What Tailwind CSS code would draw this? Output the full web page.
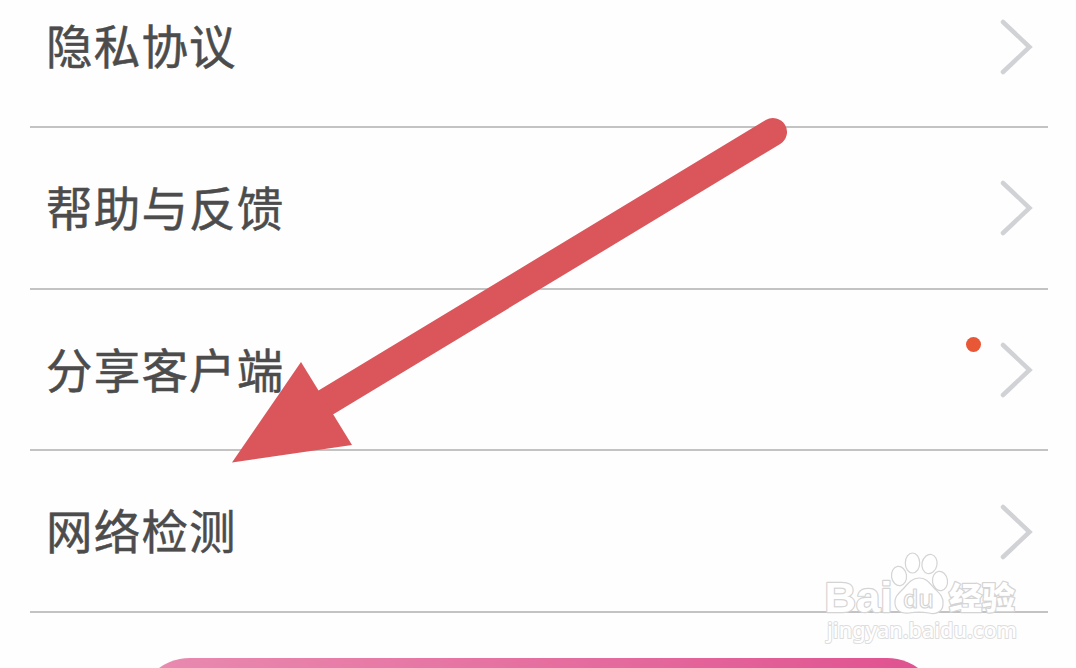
<!DOCTYPE html>
<html lang="zh-CN">
  <head>
    <meta charset="UTF-8" />
    <meta name="viewport" content="width=device-width, initial-scale=1.0" />
    <title>设置</title>
    <script src="https://cdn.jsdelivr.net/npm/@tailwindcss/browser@4"></script>
  </head>
  <body class="relative h-screen overflow-hidden bg-[#fefefe] font-['Noto_Sans_CJK_SC',sans-serif] text-[46.5px] tracking-[1.2px] text-[#4c4c4c]">
    <!-- settings list, scrolled a little past its first row -->
    <ul class="-mt-[33.7px] ml-[30px] w-[1018px] [-webkit-text-stroke:0.5px_#4c4c4c]">
      <li class="flex h-[161.7px] items-center justify-between border-b-2 border-[#c3c3c3] pl-[16px] pr-[15px]">
        <span class="pb-[3px] leading-none">隐私协议</span>
        <svg class="mt-px h-[56px] w-[34px]" viewBox="0 0 34 56" fill="none" stroke="#d0d2d5" stroke-width="4.5" stroke-linecap="round"><path d="M4 3L30.5 28L4 53" /></svg>
      </li>
      <li class="flex h-[161.7px] items-center justify-between border-b-2 border-[#c3c3c3] pl-[16px] pr-[15px]">
        <span class="pb-[3px] leading-none">帮助与反馈</span>
        <svg class="mt-px h-[56px] w-[34px]" viewBox="0 0 34 56" fill="none" stroke="#d0d2d5" stroke-width="4.5" stroke-linecap="round"><path d="M4 3L30.5 28L4 53" /></svg>
      </li>
      <li class="relative flex h-[161.7px] items-center justify-between border-b-2 border-[#c3c3c3] pl-[16px] pr-[15px]">
        <span class="pb-[3px] leading-none">分享客户端</span>
        <svg class="mt-px h-[56px] w-[34px]" viewBox="0 0 34 56" fill="none" stroke="#d0d2d5" stroke-width="4.5" stroke-linecap="round"><path d="M4 3L30.5 28L4 53" /></svg>
        <i class="absolute right-[67.5px] top-[47px] size-[15px] rounded-full bg-[#e85836]"></i>
      </li>
      <li class="flex h-[161.7px] items-center justify-between border-b-2 border-[#c3c3c3] pl-[16px] pr-[15px]">
        <span class="pb-[3px] leading-none">网络检测</span>
        <svg class="mt-px h-[56px] w-[34px]" viewBox="0 0 34 56" fill="none" stroke="#d0d2d5" stroke-width="4.5" stroke-linecap="round"><path d="M4 3L30.5 28L4 53" /></svg>
      </li>
    </ul>

    <button class="ml-[137px] mt-[45px] block h-[10px] w-[803px] overflow-hidden">
      <span class="block h-[106px] rounded-full bg-linear-to-r from-[#e98bb0] to-[#e05090]"></span>
    </button>

    <!-- pointer arrow -->
    <svg class="absolute left-0 top-0" width="1076" height="668" viewBox="0 0 1076 668">
      <path d="M773 132L310 412" stroke="#da565b" stroke-width="28" stroke-linecap="round" />
      <path d="M232 462.5L301 362L352 445Z" fill="#da565b" />
    </svg>

    <!-- watermark -->
    <svg class="absolute left-[810px] top-[540px] tracking-normal" width="230" height="128" viewBox="0 0 230 128" fill="#fff" stroke="#d4d4d4" stroke-width="1.2" stroke-linejoin="round">
      <g paint-order="stroke" stroke-width="2.4">
        <text x="14.5" y="71.5" font-family="Liberation Sans" font-weight="700" font-size="43" textLength="68" lengthAdjust="spacingAndGlyphs">Bai</text>
        <text x="139" y="69" font-family="Noto Sans CJK SC" font-weight="900" font-size="31" textLength="66" lengthAdjust="spacingAndGlyphs">经验</text>
        <text x="17" y="98" font-family="Noto Sans" font-weight="500" font-size="22.5" stroke-width="2" stroke="#dddddd" textLength="190" lengthAdjust="spacingAndGlyphs">jingyan.baidu.com</text>
      </g>
      <ellipse cx="89" cy="36" rx="7.5" ry="9.7" transform="rotate(-8 89 36)" />
      <ellipse cx="102.5" cy="23" rx="7.2" ry="10" />
      <ellipse cx="119.5" cy="24" rx="7.5" ry="9.7" transform="rotate(12 119.5 24)" />
      <ellipse cx="130" cy="41" rx="7.5" ry="9.7" transform="rotate(-8 130 41)" />
      <path d="M109 38C101 38 97 45 93 49C88 54 84 57 85 64C86 71 92 74 99 73C105 72 113 72 119 73C127 75 133 71 133 64C134 57 129 53 125 49C120 44 117 38 109 38Z" />
      <text x="93" y="68" font-family="Open Sans" font-weight="600" font-size="25" textLength="31" lengthAdjust="spacingAndGlyphs">du</text>
    </svg>
  </body>
</html>
